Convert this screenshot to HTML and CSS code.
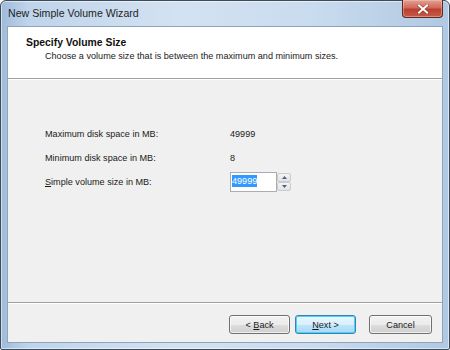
FILE: index.html
```html
<!DOCTYPE html>
<html>
<head>
<meta charset="utf-8">
<link rel="stylesheet" href="styles.css">
</head>
<body>
<div class="window">
  <div class="titlebar">
    <span class="title">New Simple Volume Wizard</span>
    <button class="close" aria-label="Close">
      <svg width="12" height="10" viewBox="0 0 12 10"><path d="M2 1.5 L10 8.5 M10 1.5 L2 8.5" stroke="#5a2a24" stroke-width="3.2" stroke-linecap="square" opacity="0.5"/><path d="M2 1.5 L10 8.5 M10 1.5 L2 8.5" stroke="#fff" stroke-width="2" stroke-linecap="square"/></svg>
    </button>
  </div>
  <div class="client">
    <div class="header">
      <div class="h-title">Specify Volume Size</div>
      <div class="h-sub">Choose a volume size that is between the maximum and minimum sizes.</div>
    </div>
    <div class="content">
      <div class="row"><span class="label">Maximum disk space in MB:</span><span class="value">49999</span></div>
      <div class="row"><span class="label">Minimum disk space in MB:</span><span class="value">8</span></div>
      <div class="row"><span class="label"><u>S</u>imple volume size in MB:</span>
        <div class="spin">
          <div class="field"><span class="sel">49999</span></div>
          <div class="arrows">
            <div class="arr"><svg width="5" height="3" viewBox="0 0 5 3"><path d="M0 3 L2.5 0 L5 3Z" fill="#4d6185"/></svg></div>
            <div class="arr"><svg width="5" height="3" viewBox="0 0 5 3"><path d="M0 0 L2.5 3 L5 0Z" fill="#4d6185"/></svg></div>
          </div>
        </div>
      </div>
    </div>
    <div class="footer">
      <button class="btn">&lt; <u>B</u>ack</button>
      <button class="btn default"><u>N</u>ext &gt;</button>
      <button class="btn cancel">Cancel</button>
    </div>
  </div>
</div>
</body>
</html>
```

FILE: styles.css
```css
* { box-sizing: border-box; }
html, body { margin: 0; padding: 0; }
body { width: 450px; height: 350px; overflow: hidden; background: #fff; font-family: "Liberation Sans", Arial, sans-serif; }
.window {
  width: 450px; height: 350px;
  border: 1px solid #3c4a5a;
  border-radius: 6px 6px 2px 2px;
  background: linear-gradient(90deg, #9fbbd9 0%, #bfd4ea 6%, #d3e2f2 40%, #c9dbee 70%, #b0c8e2 100%);
  display: flex; flex-direction: column;
  box-shadow: inset 0 0 0 1px rgba(255,255,255,0.55);
}
.titlebar {
  height: 25px; flex: none;
  display: flex; align-items: flex-start; justify-content: space-between;
  padding: 0 6px 0 7px;
}
.title { font-family: "Liberation Sans", Arial, sans-serif; font-size: 10.6px; color: #1e1e1e; line-height: 23px; margin-top: 1px; }
.close {
  width: 41px; height: 18px; margin-top: -1px; padding: 0;
  border: 1px solid #5b2a25; border-top: none;
  border-radius: 0 0 4px 4px;
  background: linear-gradient(180deg, #e3a293 0%, #d06a5a 45%, #bc3f31 55%, #c35c45 100%);
  box-shadow: inset 0 0 0 1px rgba(255,200,190,0.45);
  display: flex; align-items: center; justify-content: center;
}
.close svg { display: block; }
.client {
  flex: 1; margin: 0 6px 6px 6px;
  border: 1px solid #8ea3bd;
  background: #f0f0f0;
  display: flex; flex-direction: column;
  font-size: 9.1px; color: #1a1a1a;
}
.header {
  height: 52px; flex: none; background: #fff;
  border-bottom: 1px solid #a0a0a0;
  padding: 10px 0 0 18px;
}
.h-title { font-weight: bold; font-size: 10.4px; color: #111; line-height: 12px; }
.h-sub { margin-left: 19px; margin-top: 1px; line-height: 12px; }
.content {
  flex: 1; box-shadow: inset 0 1px 0 #fff;
  padding: 49px 0 0 37px;
  display: flex; flex-direction: column; gap: 12px;
}
.row { display: flex; align-items: center; height: 12px; }
.label { width: 185px; }
.label u, .btn u { text-decoration: underline; text-underline-offset: 1px; }
.spin { display: flex; align-items: stretch; height: 20px; }
.field {
  width: 47px; height: 20px; background: #fff;
  border: 1px solid #abadb3;
  padding: 3px 0 0 1px;
}
.sel { background: #3399ff; color: #fff; padding: 1px 0; }
.arrows { width: 14px; display: flex; flex-direction: column; padding: 1px 0; }
.arr {
  flex: 1; border: 1px solid #c8ccd2; border-radius: 2px;
  background: linear-gradient(#f4f4f4, #e2e2e2);
  display: flex; align-items: center; justify-content: center;
}
.footer {
  height: 40px; flex: none;
  border-top: 1px solid #a0a0a0; box-shadow: inset 0 1px 0 #fff;
  display: flex; justify-content: flex-end; align-items: flex-start;
  padding: 12px 10px 0 0;
}
.btn {
  width: 61px; height: 19px; padding: 0;
  font-family: "Liberation Sans", Arial, sans-serif; font-size: 9.1px; color: #1a1a1a;
  border: 1px solid #707070; border-radius: 3px;
  background: linear-gradient(180deg, #f2f2f2 0%, #ebebeb 50%, #dddddd 51%, #cfcfcf 100%);
  box-shadow: inset 0 0 0 1px rgba(255,255,255,0.7);
  margin-left: 5px;
}
.btn.default {
  border-color: #3c7fb1;
  background: linear-gradient(180deg, #eaf6fd 0%, #d9f0fc 50%, #bee6fd 51%, #a7d9f5 100%);
  box-shadow: inset 0 0 0 1px #48d3fb;
}
.btn.cancel { margin-left: 13px; width: 63px; }
```
